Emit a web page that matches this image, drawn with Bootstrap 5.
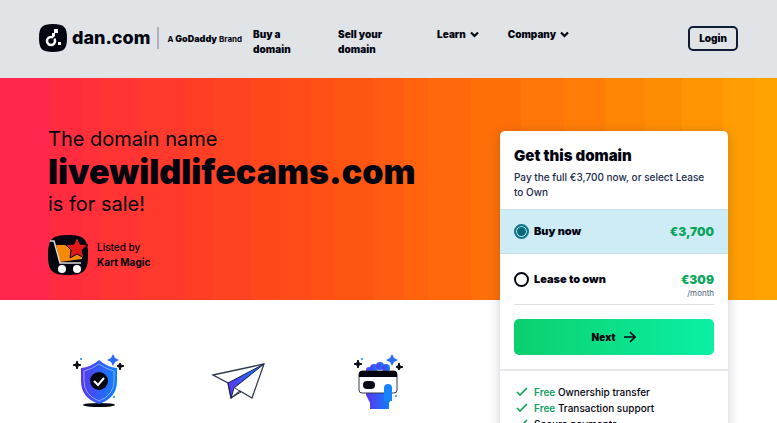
<!DOCTYPE html>
<html lang="en">
<head>
<meta charset="utf-8">
<meta name="viewport" content="width=device-width, initial-scale=1">
<title>livewildlifecams.com is for sale</title>
<link href="https://cdn.jsdelivr.net/npm/bootstrap@5.3.0/dist/css/bootstrap.min.css" rel="stylesheet">
<style>
body{font-family:Inter,"Liberation Sans",sans-serif;font-size:10px;line-height:15px;color:#02040f;background:#fff}
a{color:inherit;text-decoration:none}
svg{display:block;flex:none}
.page{height:100vh;overflow:hidden}
.topbar{background:#e1e4e7;min-height:78px;padding:24px 39px 20px}
.brand-name{font-size:18px;line-height:28px;font-weight:800;margin-left:5px}
.brand-rule{width:2px;height:22px;background:#aeb2bc;margin:0 8px 0 7px}
.brand-tag{font-weight:700;font-size:8px;margin-top:2px}
.brand-tag b{font-size:9px;font-weight:900}
.menu{font-weight:900;margin:3px 0 0 11px}
.menu li{margin-right:29px}
.menu .narrow{width:56px}
.menu .medium{width:70px}
.menu svg{margin-left:4px}
.login{border:2px solid #101b36;border-radius:5px;font-weight:900;font-size:10px;line-height:15px;padding:3px 9px;margin-top:2px;background:none;color:#02040f}
.stage{display:grid;grid-template-columns:minmax(0,1fr) 228px;padding-right:49px;background:linear-gradient(90deg,#ff284c 0 6.4%,#ff2c40 0 10.4%,#ff3039 0 13%,#ff3433 0 18%,#ff392c 0 24%,#ff3e25 0 27.4%,#ff4221 0 32.3%,#ff471c 0 36%,#ff4c18 0 40%,#ff5015 0 43%,#ff5512 0 48%,#ff5b12 0 52%,#ff630e 0 55.1%,#ff680b 0 60.6%,#ff6f09 0 67%,#ff7708 0 72.6%,#ff7d06 0 77.8%,#ff8505 0 83%,#ff8d04 0 87.8%,#ff9503 0 93%,#ff9d02 0 97.2%,#ffa301 0) top/100% 222px no-repeat}
.pitch{height:222px;padding:49px 0 0 48px}
.pitch h1{font-size:20px;line-height:24px;font-weight:400;margin:0}
.pitch span,.pitch strong{display:block}
.pitch strong{font-size:34px;line-height:41px;font-weight:900}
.seller{margin-top:19px;gap:9px;font-weight:500}
.features{width:420px;margin-left:29px;padding-top:51px}
.offer{border:0;border-radius:5px;margin-top:53px;color:#02040f;box-shadow:0 2px 12px #10203038}
.offer h2{font-size:15px;line-height:18px;font-weight:900;margin:0 0 5px}
.intro{padding:16px 14px 9px;color:#1c2b4b;font-weight:500}
.intro h2{color:#02040f}
.choice{padding:0 14px;height:45px;font-size:11px;font-weight:900}
.chosen{background:#cdecf6;border-bottom:1px solid #c8dfe8;border-top:1px solid #c8dfe8}
.lease{margin:0 14px;padding:0;height:51px;border-bottom:1px solid #dcdfe3}
.choice input{appearance:none;width:15px;height:15px;margin:0 5px 0 0;border:2px solid #02040f;border-radius:50%;background:#fff}
.choice input:checked{border-color:#0f748a;background:#09677a;box-shadow:inset 0 0 0 1px #bfeaf3}
.price{color:#0ca45d;font-size:12px}
.lease .price{padding-top:13px;text-align:right;line-height:14px}
.lease small{display:block;font-size:8px;line-height:12px;font-weight:400;color:#4c5a75}
.next{border:0;border-radius:5px;height:36px;margin:14px 14px;background:linear-gradient(90deg,#0ccf6d,#0bf0a4);font-weight:900;font-size:10px;color:#02040f;gap:9px}
.perks{border-top:2px solid #e4e6e9;padding:13px 16px;margin:0;line-height:16px;font-weight:500}
.perks svg{margin-right:6px}
.perks span{color:#0ca45d;font-weight:600}
</style>
</head>
<body>
<div class="page">
<header class="topbar d-flex align-items-start">
<a href="#" class="d-flex align-items-center"><svg width="28" height="28" viewBox="0 0 28 28"><path d="M14 0C25 0 28 3 28 14S25 28 14 28 0 25 0 14 3 0 14 0Z" fill="#02040f"/><circle cx="12" cy="17" r="4" fill="none" stroke="#fff" stroke-width="2.600"/><path d="M15 5h4v4h-4zM13 9h3v4h-3zM19 18h3v3h-3z" fill="#fff"/><path d="m12 17 5-5" stroke="#02040f" stroke-width="1.500"/></svg><span class="brand-name">dan.com</span><span class="brand-rule"></span><span class="brand-tag text-nowrap">A <b>GoDaddy</b> Brand</span></a>
<ul class="menu list-unstyled d-flex mb-0">
<li class="narrow"><a href="#">Buy a domain</a></li><li class="medium"><a href="#">Sell your<br>domain</a></li>
<li><a href="#" class="d-flex align-items-center">Learn<svg width="9" height="7" viewBox="0 0 9 7"><path d="M1 1.500 4.500 5 8 1.500" fill="none" stroke="#02040f" stroke-width="2.200"/></svg></a></li>
<li><a href="#" class="d-flex align-items-center">Company<svg width="9" height="7" viewBox="0 0 9 7"><path d="M1 1.500 4.500 5 8 1.500" fill="none" stroke="#02040f" stroke-width="2.200"/></svg></a></li>
</ul>
<button type="button" class="login ms-auto">Login</button>
</header>
<main class="stage">
<div>
<section class="pitch"><h1><span>The domain name</span><strong>livewildlifecams.com</strong><span>is for sale!</span></h1>
<div class="seller d-flex align-items-center"><svg width="40" height="40" viewBox="0 0 40 40"><path d="M20 0C36 0 40 4 40 20S36 40 20 40 0 36 0 20 4 0 20 0Z" fill="#02040f"/><path d="M8 10h9l5 3 12 8v3l-22 3Z" fill="#f58a08"/><path d="m29 2 3 7 8 1-6 5 2 8-7-4-7 4 1-8-5-5 8-1Z" fill="#e01818" stroke="#02040f"/><path d="M2 6h4l6 22h21" fill="none" stroke="#ddd" stroke-width="1.500"/><circle cx="14" cy="34" r="4" fill="#fff"/><circle cx="29" cy="34" r="4" fill="#fff"/></svg><div>Listed by<br><b>Kart Magic</b></div></div></section>
<section class="features row g-0">
<div class="col-4 d-flex justify-content-center"><svg width="60" height="60" viewBox="0 0 60 60"><defs><linearGradient id="blue"><stop stop-color="#5b35ee"/><stop offset="1" stop-color="#0a84ff"/></linearGradient></defs><ellipse cx="30" cy="54" rx="16" ry="2" fill="#02040f"/><path d="M30 9q8 7 18 8v13q0 17-18 23Q12 47 12 30V17q10-1 18-8Z" fill="url(#blue)"/><path d="M30 13q7 5 15 7v10q0 14-15 20-15-6-15-20V20q8-2 15-7Z" fill="none" stroke="#8da9ff"/><circle cx="30" cy="30" r="9" fill="#02040f"/><path d="m25 30 4 4 6-7" fill="none" stroke="#fff" stroke-width="2"/><path d="m44 3 2 4 4 2-4 2-2 4-2-4-4-2 4-2Z" fill="#286cf5"/><path d="m8 10 1 3 3 1-3 1-1 3-1-3-3-1 3-1ZM51 12l1 2 3 1-3 1-1 3-1-3-2-1 2-1Z" fill="#02040f" stroke="#02040f"/><circle cx="12" cy="8" r="1" fill="#1684ff"/><circle cx="45" cy="46" r="1" fill="#1684ff"/></svg></div>
<div class="col-4 d-flex justify-content-center"><svg width="60" height="60" viewBox="0 0 60 60"><path d="M4 24 55 13 43 47 31 40 22 47 19 32Z" fill="#fff" stroke="#303a4d" stroke-width="1.300"/><path d="m22 47 10-6M26 37l6 4" stroke="#303a4d"/><path d="M19 32 55 13 25 37 22 47Z" fill="url(#blue)" stroke="#17204d"/></svg></div>
<div class="col-4 d-flex justify-content-center"><svg width="60" height="60" viewBox="0 0 60 60"><path d="M17 39h26v8l-3 5v6H21v-6l-4-8Z" fill="url(#blue)"/><g fill="url(#blue)"><circle cx="20" cy="19" r="3"/><circle cx="25" cy="17" r="4"/><circle cx="31" cy="15" r="4"/><circle cx="37" cy="17" r="4"/></g><rect x="10" y="20" width="38" height="22" rx="3" fill="#fff" stroke="#303a4d"/><path d="M10 26v-4l2-2h34l2 2v4Z" fill="#02040f"/><rect x="14" y="30" width="12" height="8" rx="4" fill="#02040f"/><path d="M35 50V37q0-4 4-4t4 4v13Z" fill="#1684ff"/><path d="m43 3 2 4 4 2-4 2-2 4-2-4-4-2 4-2Z" fill="#286cf5"/><path d="m9 9 1 3 3 1-3 1-1 3-1-3-3-1 3-1ZM50 12l1 3 3 1-3 1-1 2-1-2-2-1 2-1Z" fill="#02040f" stroke="#02040f"/><circle cx="13" cy="8" r="1" fill="#1684ff"/><circle cx="47" cy="45" r="1" fill="#1684ff"/></svg></div>
</section>
</div>
<section class="offer card">
<div class="intro"><h2>Get this domain</h2>Pay the full €3,700 now, or select Lease to Own</div>
<label class="choice chosen d-flex align-items-center"><input type="radio" name="plan" checked>Buy now<span class="price ms-auto">€3,700</span></label>
<label class="choice lease d-flex align-items-center"><input type="radio" name="plan">Lease to own<span class="price ms-auto">€309<small>/month</small></span></label>
<button type="button" class="next d-flex align-items-center justify-content-center">Next<svg width="12" height="12" viewBox="0 0 12 12"><path d="M0 6h11M6 1l5 5-5 5" fill="none" stroke="#02040f" stroke-width="1.600"/></svg></button>
<ul class="perks list-unstyled">
<li class="d-flex align-items-center"><svg width="12" height="10" viewBox="0 0 12 10"><path d="m1 5 3 3 7-7" fill="none" stroke="#0ca45d" stroke-width="1.600"/></svg><div><span>Free</span> Ownership transfer</div></li>
<li class="d-flex align-items-center"><svg width="12" height="10" viewBox="0 0 12 10"><path d="m1 5 3 3 7-7" fill="none" stroke="#0ca45d" stroke-width="1.600"/></svg><div><span>Free</span> Transaction support</div></li>
<li class="d-flex align-items-center"><svg width="12" height="10" viewBox="0 0 12 10"><path d="m1 5 3 3 7-7" fill="none" stroke="#0ca45d" stroke-width="1.600"/></svg><div>Secure payments</div></li></ul>
</section>
</main>
</div>
<script src="https://cdn.jsdelivr.net/npm/bootstrap@5.3.0/dist/js/bootstrap.bundle.min.js"></script>
</body>
</html>
